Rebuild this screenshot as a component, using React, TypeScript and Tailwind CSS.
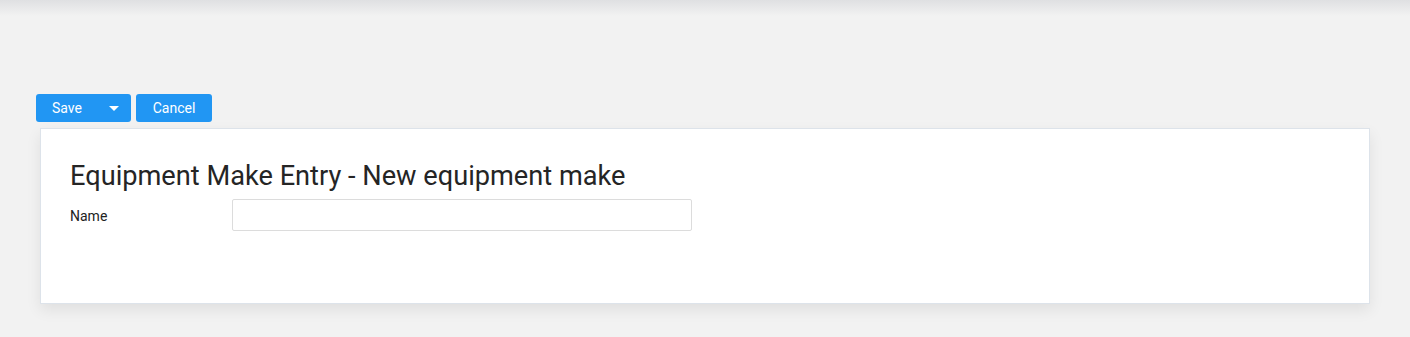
import React from 'react';

export default function App() {
  return (
    <div className="min-h-[337px] bg-[#f2f2f2] font-['Roboto',sans-serif] text-[#212121]">
      <div className="h-[16px] bg-gradient-to-b from-[#dfe0e2] to-[#f2f2f2]" />

      <div className="pt-[78px]">
        <div className="flex gap-[5px] pl-[36px]">
          <div className="flex h-[28px] w-[95px] items-center justify-between rounded-[3px] bg-[#2196f3] pl-[16px] pr-[12px] text-[14px] text-white">
            <span>Save</span>
            <svg width="10" height="5" viewBox="0 0 10 5" className="fill-white">
              <path d="M0 0 L10 0 L5 5 Z" />
            </svg>
          </div>
          <div className="flex h-[28px] w-[76px] items-center justify-center rounded-[3px] bg-[#2196f3] text-[14px] text-white">
            Cancel
          </div>
        </div>

        <div className="mx-[40px] mt-[6px] h-[176px] border border-[#dde3ea] bg-white px-[29px] pt-[30px] shadow-[0_6px_14px_rgba(0,0,0,0.08)]">
          <h1 className="text-[27.2px] leading-[34px] text-[#252525]">Equipment Make Entry - New equipment make</h1>
          <div className="mt-[6px] flex items-center">
            <label className="w-[162px] pt-[2px] text-[14px] text-[#222]">Name</label>
            <input
              className="h-[32px] w-[460px] rounded-[2px] border border-[#dcdcdc] bg-white px-2 text-[14px] outline-none"
            />
          </div>
        </div>
      </div>
    </div>
  );
}
